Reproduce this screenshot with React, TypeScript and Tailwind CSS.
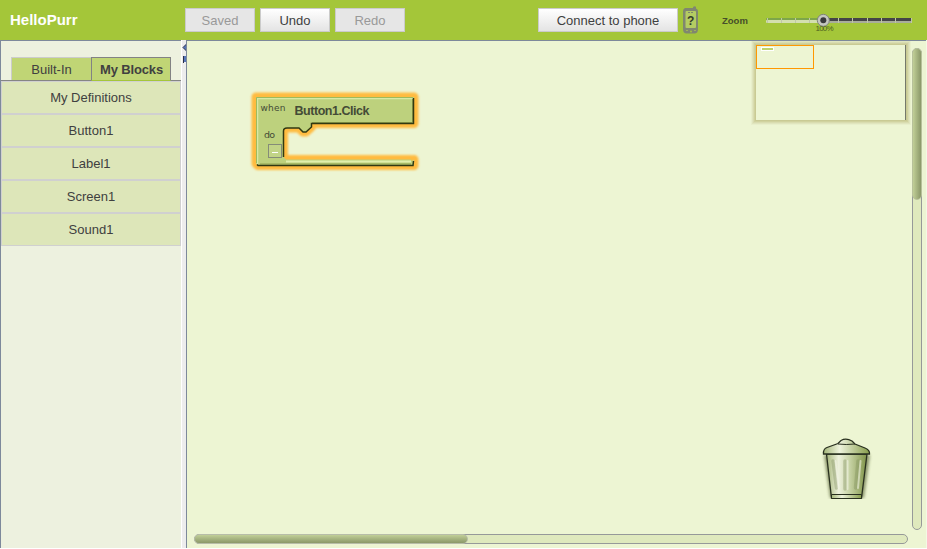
import React from "react";

const BLOCK =
  "M256 97H414V123.500H311.500V127L306 132H303L299 128H287Q283.500 128 283.500 131V157L286 159.500H411L412 161L414 159.500V165.500H258L256 163.500Z";

function ToolButton({ label, width, disabled = false }: { label: string; width: string; disabled?: boolean }) {
  return (
    <button
      className={`h-6 shrink-0 border border-[#cbcbcb] pt-px text-center text-[13px] leading-[22px] ${width} ${
        disabled ? "bg-[#e6e6e6] text-[#999]" : "bg-linear-to-b from-white to-[#e4e4e4] text-[#404040]"
      }`}
    >
      {label}
    </button>
  );
}

function PhoneIcon() {
  return (
    <svg className="ml-[5px] shrink-0" width="16" height="28" viewBox="0 0 16 28">
      <path d="M2 2H10V1Q12 -0.500 13 1V2.500Q15 3 15 5V23Q15 27 12 27.500H3Q0 27 0 23V5Q0 3 2 2Z" fill="#80876f" />
      <rect x="2.500" y="5" width="10.500" height="17" rx="1" fill="#b4cc62" />
      <path d="M5 6.500H7M8 6.500H10" stroke="#80876f" />
      <path d="M3 24.500H5M11 24.500H13" stroke="#9fb159" />
      <circle cx="8" cy="25.500" r="1" fill="#a4c639" />
      <text x="7.700" y="18.500" textAnchor="middle" fontFamily="Liberation Sans, sans-serif" fontSize="12" fontWeight="700" fill="#353b2b">?</text>
    </svg>
  );
}

function ZoomSlider() {
  return (
    <svg className="ml-[15px] shrink-0" width="152" height="36" viewBox="764 2 152 36">
      <rect x="766" y="18" width="58" height="2" rx="1" fill="#7da64a" />
      <rect x="766" y="20" width="58" height="3" rx="1" fill="#d3dfae" />
      <rect x="828" y="18" width="83" height="3" fill="#444447" />
      <rect x="828" y="21" width="83" height="2" fill="#a9ad9b" />
      {[767, 781, 795, 809, 838, 852, 867, 881, 895, 911].map((x) => (
        <path key={x} d={`M${x + 0.5} 18V23`} stroke="#bfc6a8" />
      ))}
      <circle cx="823.300" cy="20.300" r="6" fill="#c5c7c0" stroke="#808579" />
      <circle cx="823.300" cy="20.300" r="3" fill="#39393c" />
      <text x="824.500" y="31" textAnchor="middle" textLength="18" fontFamily="Liberation Sans, sans-serif" fontSize="8" fill="#4d6020">100%</text>
    </svg>
  );
}

function EventBlock() {
  return (
    <svg className="absolute left-[58px] top-[45px]" width="184" height="92" viewBox="245 86 184 92" fontFamily="Liberation Sans, sans-serif">
      <defs>
        <filter id="glow" x="-10%" y="-20%" width="120%" height="140%">
          <feGaussianBlur stdDeviation="1.200" />
        </filter>
      </defs>
      <path d={BLOCK} fill="#ffb93d" stroke="#ffbb40" strokeWidth="9" strokeLinejoin="round" filter="url(#glow)" />
      <path d={BLOCK} fill="#bdd17d" />
      <path d="M257.500 164V98.500H413" fill="none" stroke="#d8e9a6" strokeWidth="1.500" />
      <path d="M256.500 163V97.500H413" fill="none" stroke="#9fba5c" />
      <path d="M286 161.500H411" stroke="#e1f0ad" strokeWidth="2" />
      <path d="M411 164H260M312 122.500H412.500V99" fill="none" stroke="#91a351" />
      <path d="M413.500 98V123.500H311.500V127L306 132H303L299 128H287Q283.500 128 283.500 131V157" fill="none" stroke="#303912" strokeWidth="1.500" />
      <path d="M257 164.500L258 165.500H413L413.500 161" fill="none" stroke="#303912" strokeWidth="1.500" />
      <g fill="#444b36">
        <text x="260.500" y="111" fontFamily="DejaVu Sans, sans-serif" fontSize="9" textLength="25">when</text>
        <text x="264" y="138" fontFamily="DejaVu Sans, sans-serif" fontSize="9.500" textLength="11">do</text>
        <text x="294.500" y="115" fontSize="12.500" fontWeight="700" textLength="75">Button1.Click</text>
      </g>
      <rect x="268.500" y="144.500" width="13" height="13" fill="#c2d487" stroke="#858c78" />
      <path d="M272 152.500H278" stroke="#fff" />
    </svg>
  );
}

function Trash() {
  return (
    <svg className="absolute left-[631px] top-[393px]" width="58" height="70" viewBox="818 434 58 70">
      <defs>
        <linearGradient id="bin">
          <stop stopColor="#a6b67b" /><stop offset=".3" stopColor="#edf1dc" />
          <stop offset=".6" stopColor="#c3cf9f" /><stop offset="1" stopColor="#7f9348" />
        </linearGradient>
        <linearGradient id="lid">
          <stop stopColor="#a5b77a" /><stop offset=".35" stopColor="#eef3dc" /><stop offset="1" stopColor="#869c4a" />
        </linearGradient>
        <filter id="shade" x="-20%" y="-20%" width="140%" height="140%"><feGaussianBlur stdDeviation="1.500" /></filter>
        <filter id="soft" x="-20%" y="-20%" width="140%" height="140%"><feGaussianBlur stdDeviation="0.500" /></filter>
      </defs>
      <path d="M824 455H870L864 498H830Z" fill="#596336" opacity=".65" filter="url(#shade)" />
      <path d="M818 499H876V504H818Z" fill="#edf5d3" />
      <path d="M826.500 454L831.500 498H861.500L867 454Z" fill="url(#bin)" stroke="#29301f" strokeWidth="1.300" />
      <path d="M831.500 494.500V498.500H861.500V494.500Z" fill="url(#lid)" stroke="#29301f" />
      <g fill="none" strokeLinecap="round" filter="url(#soft)">
        <path d="M833 461L836.500 488M845 461V489M858 461L855.500 488" stroke="#829160" strokeWidth="3.500" opacity=".4" />
        <path d="M835.500 461L838.500 488M847.500 461V489M860.500 461L858 488" stroke="#f4f6e8" strokeWidth="2" opacity=".55" />
      </g>
      <path d="M823.500 454Q823 449 827 447.500L838 443.500L841 440.500Q846 437.500 852 441L855 444L865 448Q870 450 869.500 454Z" fill="url(#lid)" stroke="#29301f" strokeWidth="1.300" />
      <path d="M838 444Q846 445 855 444" fill="none" stroke="#29301f" />
    </svg>
  );
}

export default function App() {
  return (
    <div className="flex h-[549px] w-[927px] flex-col overflow-hidden bg-[#f4f9e5] font-['Liberation_Sans',sans-serif] text-[#404040]">
      <header className="flex h-10 shrink-0 items-center bg-[#a4c639]">
        <h1 className="ml-[10px] w-[175px] text-[15px] leading-5 font-bold text-white">HelloPurr</h1>
        <div className="flex gap-[5px]">
          <ToolButton label="Saved" width="w-[70px]" disabled />
          <ToolButton label="Undo" width="w-[70px]" />
          <ToolButton label="Redo" width="w-[70px]" disabled />
        </div>
        <div className="ml-[133px] flex items-center">
          <ToolButton label="Connect to phone" width="w-[140px]" />
          <PhoneIcon />
        </div>
        <span className="ml-[23px] w-[27px] pt-[2px] text-[9.5px] font-bold text-[#464e2a]">Zoom</span>
        <ZoomSlider />
      </header>
      <div className="flex h-[508px] shrink-0">
        <aside className="flex w-[182px] shrink-0 flex-col border-t border-l border-[#7d899b] bg-[#edf1df]">
          <div className="mt-4 flex h-6 shrink-0 items-end border-b border-[#858585] pl-[10px]">
            <div className="h-[23px] w-20 border-t border-l border-[#ccc] bg-[#c0d575] text-center text-[13px] leading-[24px]">Built-In</div>
            <div className="-mb-px h-6 w-20 border-x border-t border-[#828284] border-b border-b-[#a4c639] bg-[#c0d575] pl-px text-center text-[13px] leading-[24px] font-bold tracking-[-0.15px]">My Blocks</div>
          </div>
          <nav className="mr-px">
            {["My Definitions", "Button1", "Label1", "Screen1", "Sound1"].map((name) => (
              <div key={name} className="h-[33px] border border-[#d0d0d0] bg-[#dde6b9] text-center text-[13px] leading-[32px]">{name}</div>
            ))}
          </nav>
        </aside>
        <div className="w-1 shrink-0 bg-[#ededed] shadow-[-1px_0_0_#fff]">
          <svg width="4" height="26" viewBox="0 0 4 26">
            <path d="M4.500 4L1 7.500L4.500 11Z" fill="#5675b8" stroke="#29304a" />
            <path d="M1 16H4V22H1Z" fill="#5675b8" />
            <path d="M1.500 16V23" stroke="#29304a" />
          </svg>
        </div>
        <main className="relative w-[740px] shrink-0 overflow-hidden border-t border-l border-[#7d899b] bg-[#edf5d3]">
          <EventBlock />
          <div className="absolute left-[569px] top-[4px] h-[75px] w-[150px] border-r border-[#75796b] bg-[#edf5d3] shadow-[0_0_0_1px_#c9ca94,0_0_0_2px_#d0d29f,0_0_0_3px_#d9dcb0,0_0_0_4px_#e0e5be,0_0_0_5px_#e8efcb]">
            <div className="h-6 w-[58px] border border-[#ff9800]">
              <div className="ml-[4px] mt-px h-1 w-[13px] border border-white bg-[#bdd36b]" />
            </div>
          </div>
          <Trash />
          <div className="absolute left-[725px] top-[7px] h-[482px] w-[10px] rounded-full border border-[#969999] bg-[#dfe9bd]">
            <div className="-ml-px -mt-px h-[152px] w-[10px] rounded-full border border-[#b7c19a] bg-linear-to-r from-[#c1cf97] to-[#8b9869]" />
          </div>
          <div className="absolute left-[7px] top-[493px] h-[10px] w-[714px] rounded-full border border-[#969999] bg-[#dfe9bd]">
            <div className="-ml-px -mt-px h-[10px] w-[274px] rounded-full border border-[#b7bda8] bg-linear-to-b from-[#c1cf97] to-[#8b9869]" />
          </div>
        </main>
      </div>
      <div className="h-px bg-white" />
    </div>
  );
}
